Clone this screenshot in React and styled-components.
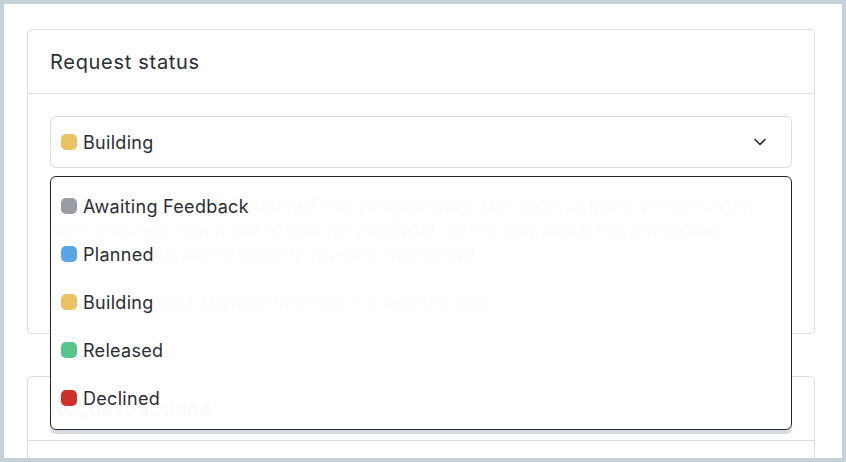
import React from "react";
import styled, { createGlobalStyle } from "styled-components";
import { ChevronDown } from "lucide-react";

const GlobalStyle = createGlobalStyle`
  html, body {
    margin: 0;
    padding: 0;
    background: #c5d2da;
  }
  body {
    font-family: Inter, "Noto Sans", "Liberation Sans", sans-serif;
    color: #2b2d35;
  }
  * {
    box-sizing: border-box;
  }
`;

const Frame = styled.div`
  padding: 4px;
  height: 462px;
`;

const Panel = styled.div`
  background: #ffffff;
  height: 454px;
  overflow: hidden;
  padding: 25px 27px 0 23px;
  display: flex;
  flex-direction: column;
  gap: 42px;
`;

const Card = styled.section`
  border: 1px solid #dcdde3;
  border-radius: 5px;
  background: #fff;
  flex-shrink: 0;
`;

const CardHeader = styled.header`
  height: 64px;
  padding: 0 22px;
  display: flex;
  align-items: center;
  border-bottom: 1px solid #dcdde3;
`;

const CardTitle = styled.h2`
  margin: 0;
  font-size: 20px;
  font-weight: 400;
  letter-spacing: 0.7px;
  color: #2b2d35;
`;

const CardBody = styled.div`
  padding: 22px 22px 19px;
  min-height: ${(p) => p.$minHeight || 0}px;
`;

const SelectWrap = styled.div`
  position: relative;
`;

const SelectBox = styled.div`
  height: 52px;
  border: 1px solid #dcdde3;
  border-radius: 6px;
  padding: 0 21px 0 10px;
  display: flex;
  align-items: center;
  gap: 6px;
  font-size: 18px;
  letter-spacing: 0.3px;
  color: #2b2d35;
  svg {
    margin-left: auto;
    color: #2b2d35;
  }
`;

const Dot = styled.span`
  width: 16px;
  height: 16px;
  border-radius: 5px;
  background: ${(p) => p.$color};
  flex-shrink: 0;
`;

const Menu = styled.ul`
  position: absolute;
  top: calc(100% + 8px);
  left: 0;
  right: 0;
  z-index: 10;
  margin: 0;
  padding: 5px 0 7px;
  list-style: none;
  background: rgba(255, 255, 255, 0.972);
  border: 1.5px solid #24262d;
  border-radius: 6px;
  box-shadow: 0 4px 0 #d7dce4;
`;

const MenuItem = styled.li`
  height: 48px;
  padding: 0 10px;
  display: flex;
  align-items: center;
  gap: 6px;
  font-size: 18px;
  letter-spacing: 0.3px;
  color: #2b2d35;
`;

const Description = styled.p`
  margin: 26px 0 0;
  padding-right: 20px;
  font-size: 18px;
  line-height: 24px;
  font-style: italic;
  letter-spacing: 0.4px;
  color: #6f7380;
`;

const Author = styled.div`
  margin-top: 24px;
  height: 24px;
  display: flex;
  align-items: center;
  gap: 8px;
  font-size: 18px;
  letter-spacing: 0.45px;
  color: #6f7380;
`;

const Avatar = styled.span`
  width: 24px;
  height: 24px;
  border-radius: 50%;
  background: #b9bcc4;
`;

const statuses = [
  { label: "Awaiting Feedback", color: "#9a9ca3" },
  { label: "Planned", color: "#58a6e8" },
  { label: "Building", color: "#e8c263" },
  { label: "Released", color: "#57c48a" },
  { label: "Declined", color: "#cf3029" },
];

const App = () => {
  const current = statuses[2];
  return (
    <>
      <GlobalStyle />
      <Frame>
        <Panel>
          <Card>
            <CardHeader>
              <CardTitle>Request status</CardTitle>
            </CardHeader>
            <CardBody>
              <SelectWrap>
                <SelectBox>
                  <Dot $color={current.color} />
                  {current.label}
                  <ChevronDown size={20} strokeWidth={2} />
                </SelectBox>
                <Menu>
                  {statuses.map((s) => (
                    <MenuItem key={s.label}>
                      <Dot $color={s.color} />
                      {s.label}
                    </MenuItem>
                  ))}
                </Menu>
              </SelectWrap>
              <Description>
                We've started development of this functionality. Our team is
                hard at work right now and may reach out to you for feedback so
                we can make this awesome. Please upvote this request if you are
                interested!
              </Description>
              <Author>
                <Avatar />
                Ada Nwuoba (pendo-internal) - 6 months ago
              </Author>
            </CardBody>
          </Card>
          <Card>
            <CardHeader>
              <CardTitle>Request actions</CardTitle>
            </CardHeader>
            <CardBody $minHeight={80} />
          </Card>
        </Panel>
      </Frame>
    </>
  );
};

export default App;
